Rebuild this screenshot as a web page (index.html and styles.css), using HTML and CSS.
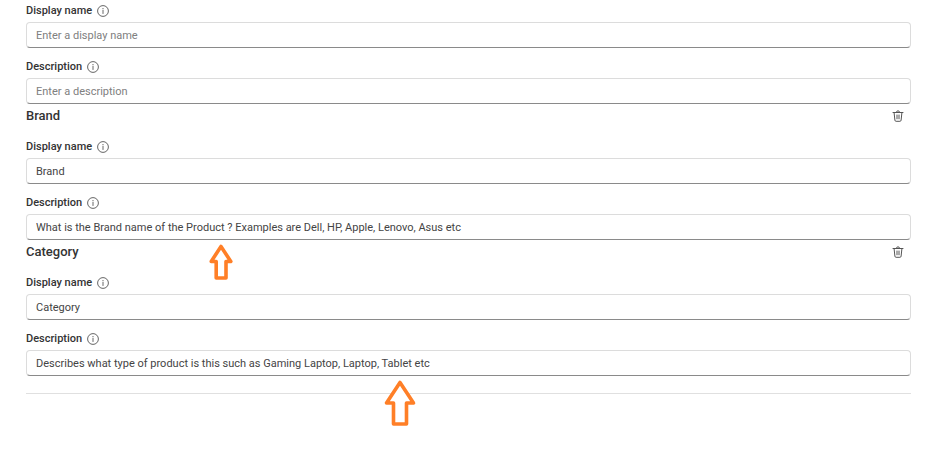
FILE: index.html
```html
<!DOCTYPE html>
<html lang="en">
<head>
    <meta charset="UTF-8">
    <meta name="viewport" content="width=device-width, initial-scale=1.0">
    <title>Fields</title>
    <link rel="stylesheet" href="styles.css">
</head>
<body>
    <!-- Shared icons -->
    <svg class="icon-defs" aria-hidden="true">
        <symbol id="icon-info" viewBox="0 0 12 12">
            <circle cx="6" cy="6" r="5.4" fill="none" stroke="currentColor" stroke-width="0.9"/>
            <path d="M6 5.4v3.1" stroke="currentColor" stroke-width="0.9" stroke-linecap="round"/>
            <circle cx="6" cy="3.7" r="0.6" fill="currentColor"/>
        </symbol>
        <symbol id="icon-trash" viewBox="0 0 12 12">
            <path d="M1 2.5h10M4.4 2.3a1.6 1.5 0 0 1 3.2 0M2.1 2.7l.8 7.5a1.2 1.2 0 0 0 1.2 1.1h3.8a1.2 1.2 0 0 0 1.2-1.1l.8-7.5M5 5v3.8M7 5v3.8" fill="none" stroke="currentColor" stroke-width="1" stroke-linecap="round"/>
        </symbol>
    </svg>

    <form class="fields">
        <section class="group">
            <div class="field">
                <div class="field-label">
                    <label for="name1">Display name</label>
                    <button type="button" class="icon-button" aria-label="About display name"><svg><use href="#icon-info"/></svg></button>
                </div>
                <input type="text" id="name1" placeholder="Enter a display name">
            </div>
            <div class="field">
                <div class="field-label">
                    <label for="desc1">Description</label>
                    <button type="button" class="icon-button" aria-label="About description"><svg><use href="#icon-info"/></svg></button>
                </div>
                <input type="text" id="desc1" placeholder="Enter a description">
            </div>
        </section>

        <!-- Brand -->
        <section class="group">
            <div class="group-header">
                <h2>Brand</h2>
                <button type="button" class="icon-button" aria-label="Delete Brand"><svg><use href="#icon-trash"/></svg></button>
            </div>
            <div class="field">
                <div class="field-label">
                    <label for="name2">Display name</label>
                    <button type="button" class="icon-button" aria-label="About display name"><svg><use href="#icon-info"/></svg></button>
                </div>
                <input type="text" id="name2" value="Brand">
            </div>
            <div class="field">
                <div class="field-label">
                    <label for="desc2">Description</label>
                    <button type="button" class="icon-button" aria-label="About description"><svg><use href="#icon-info"/></svg></button>
                </div>
                <input type="text" id="desc2" value="What is the Brand name of the Product ? Examples are Dell, HP, Apple, Lenovo, Asus etc">
                <svg class="arrow arrow-brand" viewBox="0 0 24 36" aria-hidden="true">
                    <path d="M12 2.5L21.8 17.5H17V34H7.2V17.5H2.2Z"/>
                </svg>
            </div>
        </section>

        <!-- Category -->
        <section class="group">
            <div class="group-header">
                <h2>Category</h2>
                <button type="button" class="icon-button" aria-label="Delete Category"><svg><use href="#icon-trash"/></svg></button>
            </div>
            <div class="field">
                <div class="field-label">
                    <label for="name3">Display name</label>
                    <button type="button" class="icon-button" aria-label="About display name"><svg><use href="#icon-info"/></svg></button>
                </div>
                <input type="text" id="name3" value="Category">
            </div>
            <div class="field">
                <div class="field-label">
                    <label for="desc3">Description</label>
                    <button type="button" class="icon-button" aria-label="About description"><svg><use href="#icon-info"/></svg></button>
                </div>
                <input type="text" id="desc3" value="Describes what type of product is this such as Gaming Laptop, Laptop, Tablet etc">
                <svg class="arrow arrow-category" viewBox="0 0 32 46" aria-hidden="true">
                    <path d="M16 2.5L29.5 23H22.5V44H9.5V23H2.5Z"/>
                </svg>
            </div>
        </section>
        <hr>
    </form>
</body>
</html>
```

FILE: styles.css
```css
* {
    box-sizing: border-box;
}

body {
    margin: 0;
    background-color: #fff;
    color: #333;
    font-family: Roboto, "Noto Sans", sans-serif;
    font-size: 11px;
    line-height: 16px;
}

.icon-defs {
    position: absolute;
    width: 0;
    height: 0;
}

.fields {
    min-height: 100vh;
    padding: 3px 29px 48px 26px;
}

/* Group title with its delete button */
.group-header {
    display: flex;
    justify-content: space-between;
    align-items: center;
    height: 24px;
    margin-bottom: 11px;
    padding-right: 7px;
}

h2 {
    margin: 0;
    font-size: 13px;
    font-weight: 500;
}

.icon-button {
    width: 12px;
    height: 12px;
    padding: 0;
    border: none;
    background: none;
    color: #555;
    cursor: pointer;
}

.icon-button svg {
    display: block;
    width: 12px;
    height: 12px;
}

/* Label above a full width text box */
.field {
    position: relative;
}

.field + .field {
    margin-top: 11px;
}

.field-label {
    display: flex;
    align-items: center;
    gap: 5px;
    margin-bottom: 3px;
    font-weight: 500;
}

input {
    display: block;
    width: 100%;
    height: 26px;
    padding: 0 9px;
    border: 1px solid #dcdcdc;
    border-bottom-color: #8a8a8a;
    border-radius: 4px;
    background-color: #fff;
    color: #444;
    font: inherit;
}

input::placeholder {
    color: #808080;
    opacity: 1;
}

/* Arrows drawn over the form */
.arrow {
    position: absolute;
    top: 100%;
    z-index: 1;
    fill: #fff;
    stroke: #ff7f27;
    stroke-width: 3.6;
    stroke-linejoin: round;
}

.arrow-brand {
    left: 183px;
    width: 24px;
    height: 36px;
    margin-top: 4px;
}

.arrow-category {
    left: 358px;
    width: 32px;
    height: 46px;
    margin-top: 4px;
}

hr {
    margin: 17px 0 0;
    border: none;
    border-top: 1px solid #e0e0e0;
}
```
